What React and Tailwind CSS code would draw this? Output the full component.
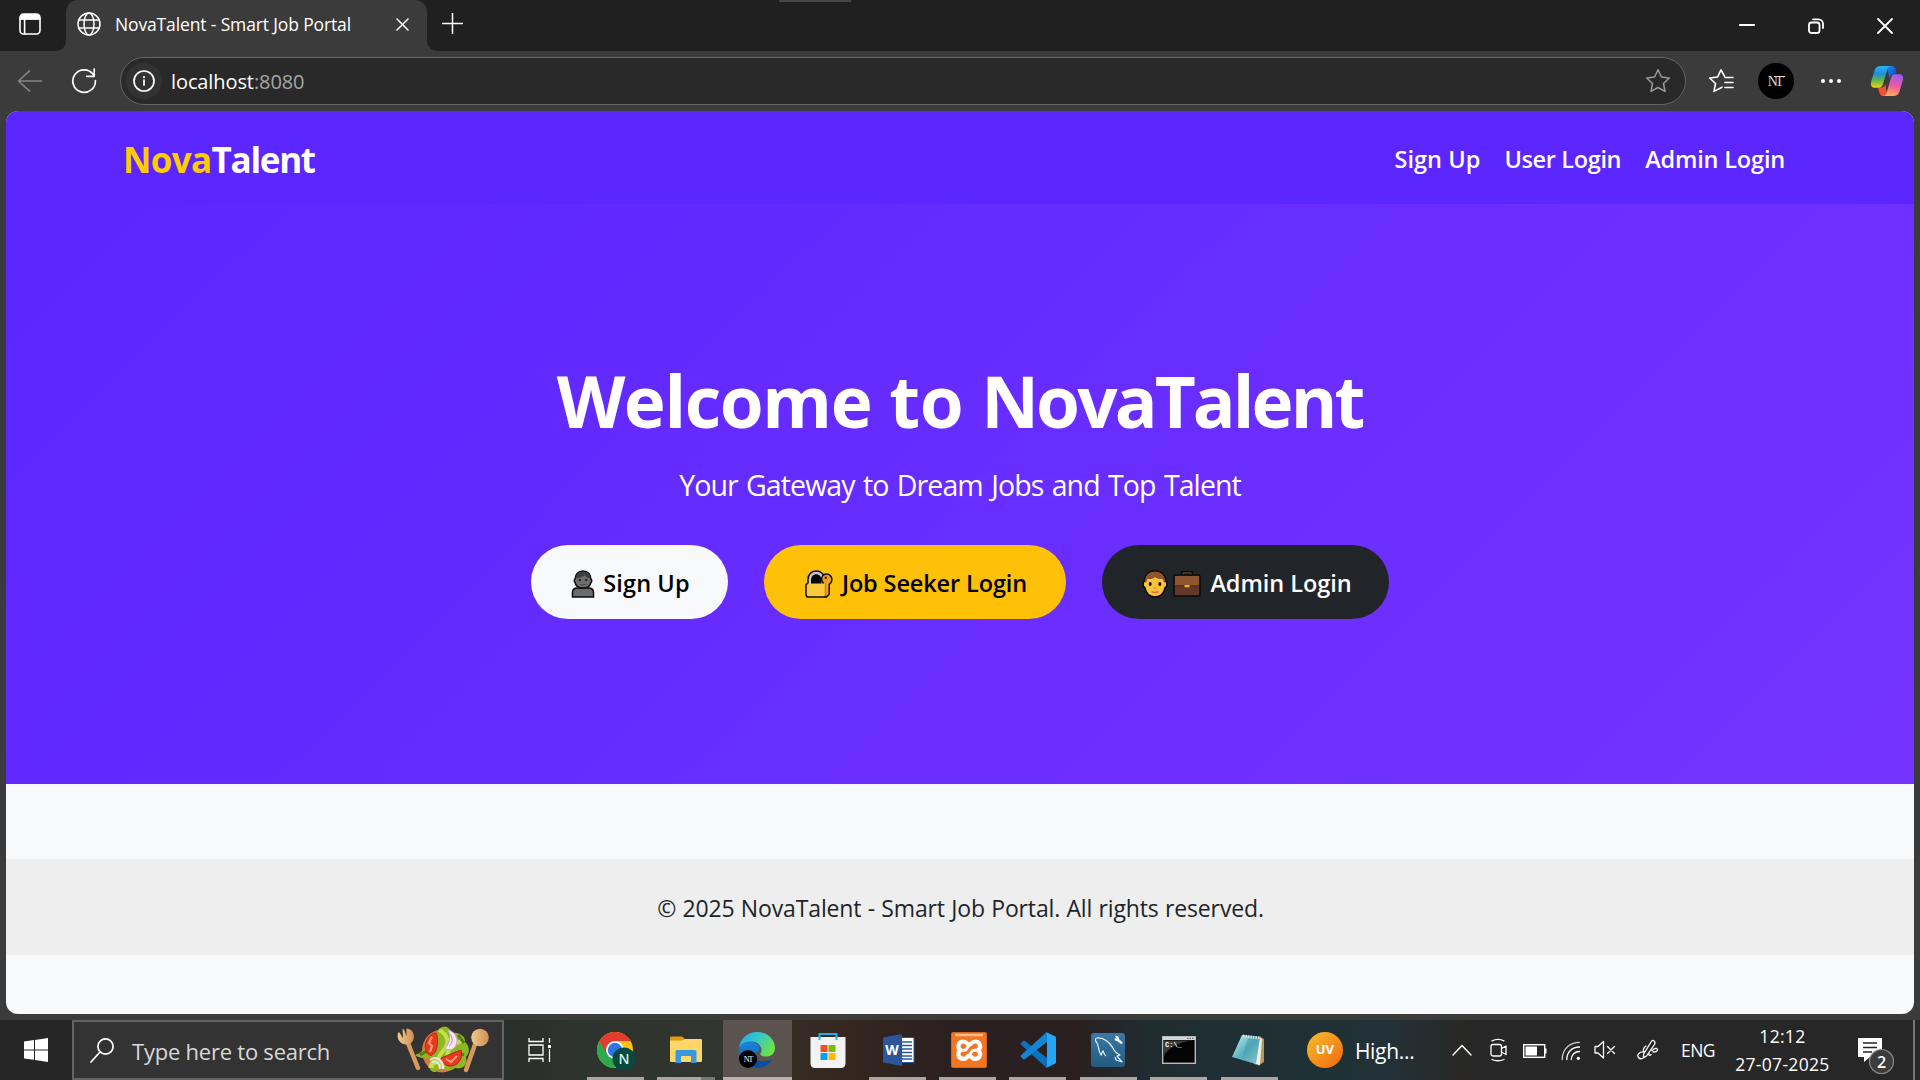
import React from "react";

const STROKE = { fill: "none", stroke: "currentColor", strokeLinecap: "round", strokeLinejoin: "round" };

function TabStrip() {
  return (
    <div className="relative flex h-[51px] items-center bg-[#202020] text-white">
      <svg className="ml-[19px] mt-[-3px] h-[22px] w-[22px]" viewBox="0 0 22 22" {...STROKE} strokeWidth="1.6">
        <rect x="1" y="1" width="20" height="20" rx="3.5" />
        <path d="M1.5 2.500q1-1.500 3-1.500h13q2 0 3 1.500v4h-19z" fill="white" stroke="none" />
        <path d="M1 6h20M5.6 6v15" />
      </svg>
      <div className="relative ml-[25px] flex h-[51px] w-[361px] items-center rounded-t-[12px] bg-[#3b3b3b]">
        <svg className="absolute -left-[10px] bottom-0 h-[10px] w-[10px]" viewBox="0 0 10 10"><path d="M10 0v10H0A10 10 0 0 0 10 0z" fill="#3b3b3b" /></svg>
        <svg className="absolute -right-[10px] bottom-0 h-[10px] w-[10px]" viewBox="0 0 10 10"><path d="M0 0v10h10A10 10 0 0 1 0 0z" fill="#3b3b3b" /></svg>
        <svg className="ml-[11px] mt-[-3px] h-[24px] w-[24px]" viewBox="0 0 24 24" {...STROKE} strokeWidth="1.5">
          <circle cx="12" cy="12" r="11" /><ellipse cx="12" cy="12" rx="5" ry="11" /><path d="M2 8h20M2 16h20" />
        </svg>
        <span className="ml-[14px] mt-[-3px] w-[236px] whitespace-nowrap text-[17.5px] tracking-[-0.140px]">NovaTalent - Smart Job Portal</span>
        <svg className="ml-[45px] mt-[-2px] h-[13px] w-[13px]" viewBox="0 0 13 13" {...STROKE} strokeWidth="1.5"><path d="M1 1l11 11M12 1L1 12" /></svg>
      </div>
      <svg className="ml-[15px] mt-[-4px] h-[21px] w-[21px]" viewBox="0 0 21 21" {...STROKE} strokeWidth="1.5"><path d="M10.500.5v20M.5 10.500h20" /></svg>
      <div className="absolute left-[779px] top-0 h-[2px] w-[72px] bg-[#454545]" />
      <svg className="ml-auto mt-[-1px] h-[16px] w-[16px]" viewBox="0 0 16 16" {...STROKE} strokeWidth="1.8"><path d="M.8 8h14.400" /></svg>
      <svg className="ml-[53px] h-[16px] w-[16px]" viewBox="0 0 16 16" {...STROKE} strokeWidth="1.8">
        <rect x="1" y="4.500" width="10.500" height="10.500" rx="2.500" /><path d="M5 1.300h5.500a4.500 4.500 0 0 1 4.500 4.500V10" />
      </svg>
      <svg className="ml-[53px] mr-[27px] h-[16px] w-[16px]" viewBox="0 0 16 16" {...STROKE} strokeWidth="1.8"><path d="M1 1l14 14M15 1L1 15" /></svg>
    </div>
  );
}

function Copilot() {
  return (
    <svg className="h-[32px] w-[34px]" viewBox="0 0 34 32">
      <defs>
        <linearGradient id="cpA" x1="0" y1="0" x2="0" y2="1"><stop offset="0" stopColor="#28b5f5" /><stop offset=".35" stopColor="#1b8fe0" /><stop offset=".65" stopColor="#5fb54a" /><stop offset="1" stopColor="#f6cf10" /></linearGradient>
        <linearGradient id="cpB" x1=".6" y1="0" x2=".3" y2="1"><stop offset="0" stopColor="#9a5cf0" /><stop offset=".5" stopColor="#ef5aa0" /><stop offset="1" stopColor="#ffb05a" /></linearGradient>
        <linearGradient id="cpC" x1="0" y1="0" x2="1" y2="1"><stop offset="0" stopColor="#1b8fe8" /><stop offset="1" stopColor="#1a35c8" /></linearGradient>
      </defs>
      <path d="M17 1h4.500c2.500 0 3.500 1.500 4.200 4L27 9.500h-2.500c-3 0-4 1-5 4z" fill="url(#cpC)" />
      <path d="M17 31h-4c-2 0-3-1.500-3.800-4L8 22.500h3c3 0 3.500-1 4.500-4z" fill="#f4502e" />
      <path d="M10.500 1H21c-2.500 0-3.300 2-4 4.500l-3.800 13c-.8 2.700-2 4.200-5 4.200H4.600C1.500 22.700.3 20 1.200 16.500L4.500 5.500C5.400 2.500 7.500 1 10.500 1z" fill="url(#cpA)" />
      <path d="M23.500 31H13c2.500 0 3.300-2 4-4.500l3.800-13c.8-2.700 2-4.200 5-4.200h3.600c3.100 0 4.300 2.700 3.400 6.200l-3.300 11C28.600 29.500 26.500 31 23.500 31z" fill="url(#cpB)" />
    </svg>
  );
}

function AddressBar() {
  return (
    <div className="flex h-[60px] items-center bg-[#3b3b3b] text-white">
      <svg className="ml-[17px] mt-[-1px] h-[24px] w-[26px] text-[#858585]" viewBox="0 0 26 24" {...STROKE} strokeWidth="1.600"><path d="M24.500 12H1.500M12.500 1.800L1.500 12l11 10.200" /></svg>
      <svg className="ml-[28px] h-[26px] w-[26px]" viewBox="0 0 26 26" {...STROKE} strokeWidth="1.700"><path d="M24.400 12.500A11.300 11.300 0 1 1 22.300 6.500M23.200 1v7.300h-7.500" /></svg>
      <div className="ml-[23px] flex h-[48px] w-[1566px] items-center rounded-full border-[1.500px] border-[#646464] bg-[#292929]">
        <div className="ml-[5px] flex h-[36px] w-[36px] items-center justify-center rounded-full bg-[#323232]">
          <svg className="h-[22px] w-[22px]" viewBox="0 0 22 22" {...STROKE} strokeWidth="1.700"><circle cx="11" cy="11" r="10" /><path d="M11 10v5" /><path d="M11 7v.1" strokeWidth="2.200" /></svg>
        </div>
        <div className="ml-[9px] mt-[1px] whitespace-nowrap text-[20px] tracking-[-0.100px]">localhost<span className="text-[#a6a6a6]">:8080</span></div>
        <svg className="ml-auto mr-[14px] h-[26px] w-[26px] text-[#9a9a9a]" viewBox="0 0 26 26" {...STROKE} strokeWidth="1.500"><path d="M13 1.800l3.400 7.200 7.900 1-5.800 5.500 1.500 7.900-7-3.900-7 3.900 1.500-7.900L1.700 10l7.900-1z" /></svg>
      </div>
      <svg className="ml-[22px] h-[26px] w-[26px]" viewBox="0 0 26 26" {...STROKE} strokeWidth="1.600"><path d="M16.500 8.200L13 1.800 9.600 9l-7.900 1 5.800 5.500L6 23.400l8-4.200M17 9.500h8M17 14.500h8M17 19.500h8" /></svg>
      <div className="relative ml-[24px] flex h-[36px] w-[36px] items-center justify-center rounded-full bg-black pr-[3px] font-['Liberation_Serif'] text-[14px] tracking-[-2.500px] text-[#dcdcdc]">NT<span className="absolute left-[16px] top-[13px] h-[1px] w-[11px] bg-[#dcdcdc]" /></div>
      <svg className="ml-[26px] h-[6px] w-[22px]" viewBox="0 0 22 6" fill="white"><circle cx="3" cy="3" r="2" /><circle cx="11" cy="3" r="2" /><circle cx="19" cy="3" r="2" /></svg>
      <div className="ml-[28px]"><Copilot /></div>
    </div>
  );
}

function PersonEmoji() {
  return (
    <svg className="h-[28px] w-[24px]" viewBox="0 0 24 28" stroke="#0b0b0b" strokeWidth="1.500">
      <path d="M1.500 27v-4.500c0-3 2-4.500 5-4.500h11c3 0 5 1.500 5 4.500V27z" fill="#6b6b6b" />
      <path d="M4 9C4.300 4.500 7.200 1 12 1s7.700 3.500 8 8c1 .8 1 2.600 0 3.400-.6 3.400-3.700 5.600-8 5.600s-7.400-2.200-8-5.600c-1-.8-1-2.600 0-3.400z" fill="#6e6e6e" />
      <path d="M4.500 8.500C5 4.500 7.800 1.800 12 1.800s7 2.700 7.500 6.700C17 8 14.500 6.500 13.500 5 12 7 8 7.500 4.500 8.500z" fill="#3d3d3d" stroke="none" />
      <circle cx="8.800" cy="10" r="1.100" fill="#111" stroke="none" /><circle cx="15.200" cy="10" r="1.100" fill="#111" stroke="none" />
      <path d="M9 14.200q3 1.600 6 0" fill="none" stroke="#4a4a4a" strokeWidth="1" />
    </svg>
  );
}

function LockEmoji() {
  return (
    <svg className="h-[28px] w-[28px]" viewBox="0 0 28 28">
      <path d="M3 15V9.500C3 4 7 .9 11.200.9c3 0 5.500 1.500 6.900 3.600V15z" fill="#c4c8cc" stroke="#111" strokeWidth="1.500" />
      <path d="M6 14v-4c0-3.500 2.300-5.800 5.200-5.800s5.300 2.300 5.300 5.800v4z" fill="#050505" />
      <path d="M17.500 6c2-2.600 6.500-2.600 8.500.5 1.800 3 .6 6.500-1.800 8v9.500l-2 2.500h-4V13c-1.500-2-1.800-5-.7-7z" fill="#f0a11a" stroke="#111" strokeWidth="1.500" />
      <circle cx="20.800" cy="7.800" r="1.200" fill="#111" />
      <path d="M3 13.500h16.500V27h-16C1.800 27 1 26.200 1 24.500V15.500c0-1.200.8-2 2-2z" fill="#fcc83c" />
      <path d="M19.500 27h-16C1.800 27 1 26.200 1 24.500V15.500c0-1.200.8-2 2-2M19.500 27h2.500" fill="none" stroke="#111" strokeWidth="1.500" />
      <path d="M20.500 13.500v12" stroke="#c9810c" strokeWidth="1" />
    </svg>
  );
}

function BoyEmoji() {
  return (
    <svg className="h-[28px] w-[26px]" viewBox="0 0 26 28">
      <path d="M2.500 11C2.500 5 7 1 13 1s10.500 4 10.500 10c2 1 2 5.500-.3 6.500C22 23.500 18 27 13 27S4 23.500 2.800 17.500C.5 16.500.5 12 2.500 11z" fill="#fcc43a" stroke="#0d0d0d" strokeWidth="1.600" />
      <path d="M3 13C2.500 6 7 1.800 13 1.800S23.500 6 23 13c-1.500-1-2-2.500-2.500-4-3.500.3-6-.5-7.500-2-2 2-4.500 2.300-7.500 2C5 10.500 4.500 12 3 13z" fill="#8f5430" />
      <ellipse cx="8.200" cy="14" rx="1.500" ry="2" fill="#111" /><ellipse cx="17.800" cy="14" rx="1.500" ry="2" fill="#111" />
      <path d="M11.500 18h3" stroke="#ef8a5a" strokeWidth="1.500" /><path d="M9.500 21.500q3.500 2 7 0" fill="none" stroke="#e2694a" strokeWidth="1.500" />
    </svg>
  );
}

function BriefcaseEmoji() {
  return (
    <svg className="h-[26px] w-[28px]" viewBox="0 0 28 26">
      <path d="M9.500 5V1.500h9V5" fill="none" stroke="#080808" strokeWidth="3.200" /><path d="M10 5V2h8v3" fill="none" stroke="#8f5430" strokeWidth="1" />
      <rect x="1" y="4" width="26" height="21" rx="1.500" fill="#633a2a" stroke="#080808" strokeWidth="1.500" />
      <path d="M2 5h24v9.500H2z" fill="#8f5430" /><path d="M2 14.800h24" stroke="#4c2b20" /><rect x="11.500" y="14" width="5" height="2.200" fill="#f2b90c" />
    </svg>
  );
}

function Page() {
  return (
    <div className="mx-[6px] h-[903px] overflow-hidden rounded-[12px] bg-[#f8f9fa] text-white">
      <header className="flex h-[93px] items-center justify-between bg-[#5b26ff] pl-[117px] pr-[129px] shadow-[0_2px_6px_rgba(0,0,0,0.02)]">
        <div className="mt-[6px] whitespace-nowrap text-[35px] font-bold tracking-[-1.300px]"><span className="tracking-[-0.650px] text-[#ffcc00]">Nova</span>Talent</div>
        <nav className="mt-[4px] flex gap-[24px] whitespace-nowrap text-[23.5px] font-semibold">
          <span className="tracking-[0.050px]">Sign Up</span><span className="tracking-[-0.350px]">User Login</span><span className="tracking-[-0.180px]">Admin Login</span>
        </nav>
      </header>
      <section className="flex h-[580px] flex-col items-center bg-[linear-gradient(135deg,#5b26ff,#7433ff)]">
        <h1 className="mt-[153px] whitespace-nowrap pr-[1px] text-[71px] font-bold leading-[88px]"><span className="tracking-[-1.400px]">Welcome</span><span className="tracking-[-0.400px]"> to </span><span className="tracking-[-2.900px]">NovaTalent</span></h1>
        <p className="mt-[18px] whitespace-nowrap text-[28.5px] leading-[44px] tracking-[-0.900px] [word-spacing:1.800px]">Your Gateway to Dream Jobs and Top Talent</p>
        <div className="mt-[38px] flex gap-[36px] whitespace-nowrap text-[23.5px] font-semibold tracking-[-0.050px]">
          <div className="flex h-[74px] w-[197px] items-center justify-center gap-[8px] rounded-full bg-[#f8f9fa] pl-[2px] pt-[3px] text-black"><PersonEmoji /><span className="tracking-[0.100px]">Sign Up</span></div>
          <div className="flex h-[74px] w-[302px] items-center justify-center gap-[9px] rounded-full bg-[#ffc107] pl-[2px] pt-[3px] text-black"><LockEmoji /><span className="tracking-[-0.120px]">Job Seeker Login</span></div>
          <div className="flex h-[74px] w-[287px] items-center justify-center rounded-full bg-[#212529] pl-[3px] pt-[3px]"><BoyEmoji /><span className="ml-[5px]"><BriefcaseEmoji /></span><span className="ml-[9px]">Admin Login</span></div>
        </div>
      </section>
      <footer className="mt-[75px] flex h-[96px] items-center justify-center whitespace-nowrap bg-[#eeeeee] pl-[1px] pt-[3px] text-[23px] tracking-[-0.140px] text-[#212529] [word-spacing:0.500px]">
        © 2025 NovaTalent - Smart Job Portal. All rights reserved.
      </footer>
    </div>
  );
}

function Salad() {
  return (
    <svg className="h-[50px] w-[94px]" viewBox="0 0 94 50">
      <defs><linearGradient id="wood" x1="0" x2="1"><stop stopColor="#f3c98e" /><stop offset="1" stopColor="#cf8e50" /></linearGradient></defs>
      <path d="M11.500 17l10.500 26M79.500 18L70 45" stroke="#d79a5c" strokeWidth="4.500" strokeLinecap="round" />
      <path d="M2 8c1.500-3 3 3 5 5L6.500 4c2-1 3 5 4 7L10.500 3.500C19 4 20 15 14.500 18.500 6 22 0 15 2 8z" fill="url(#wood)" />
      <circle cx="84" cy="12.500" r="8.800" fill="url(#wood)" />
      <ellipse cx="46" cy="26" rx="20" ry="21.500" fill="#d9783f" />
      <path d="M42 5c6-6 11-4 14 3 6-1 14 3 13 9 5 4 5 11 1 15 2 8-3 13-11 11-5 4-11 3-14-2-4 9-11 7-12 0 0-4 2-6 4-8-7 1-15 0-18-3 8-2 8-8 15-9 2-7 7-8 8-16z" fill="#8fb623" />
      <path d="M43 5c8 4 12 12 4 21s-4 12 1 17M66 16c-9 2-14 8-15 15" fill="none" stroke="#c4e04e" strokeWidth="4" />
      <path d="M35 43c0-5 4-7 9-7" stroke="#c4e04e" strokeWidth="5" fill="none" />
      <path d="M68 30c-5-2-8-3-12 0M24 30c7-5 10-3 15-7M62 10l6 8" stroke="#587d18" strokeWidth="3" fill="none" />
      <path d="M40 8C29 9 25 28 35 30.500c7-2 8-17 5-22.500z" fill="#e83a22" stroke="#b72416" /><path d="M36 12l-3 6 3 3-2 6" stroke="#ffa27a" strokeWidth="2" fill="none" />
      <path d="M45 33l20-8c3 9-4 17-12 16-5-1-8-5-8-8z" fill="#ea3a25" stroke="#b72416" /><path d="M50 34l5 3 6-6" stroke="#ffa27a" strokeWidth="2" fill="none" />
      <path d="M52 5c9 2 12 12 6 18-3 3-8 2-9 0 5-5 6-12 3-18z" fill="#f4e7f1" stroke="#c3a2be" /><path d="M54 9c3 4 3 9-1 12" fill="none" stroke="#bd89b4" />
      <path d="M34 35c7-5 14 1 13 9M36 37c5-1 8 2 8 7" stroke="#eee0ee" strokeWidth="2" fill="none" />
    </svg>
  );
}

function Chrome() {
  return (
    <svg className="h-[40px] w-[40px]" viewBox="0 0 40 40">
      <circle cx="18" cy="20" r="18" fill="#fbc116" />
      <path d="M18 20L2.400 11A18 18 0 0 0 18 38l8-13z" fill="#2da94f" />
      <path d="M18 11h15.600A18 18 0 0 0 2.400 11l7.800 13.500z" fill="#e33b2e" />
      <circle cx="18" cy="20" r="9" fill="white" /><circle cx="18" cy="20" r="7.200" fill="#2b76e5" />
      <circle cx="27" cy="29" r="11.500" fill="#06493f" />
      <text x="27" y="34" textAnchor="middle" fontSize="14" fontWeight="600" fill="#dcebe6">N</text>
    </svg>
  );
}

function Explorer() {
  return (
    <svg className="h-[28px] w-[32px]" viewBox="0 0 32 28">
      <path d="M0 2c0-1 .6-1.500 1.500-1.500H12l2.500 2V8H0z" fill="#e09b0c" />
      <path d="M0 4.500h12l3-1.500h15.500c1 0 1.500.5 1.500 1.500v20c0 1-.5 1.500-1.500 1.500h-29C.5 26 0 25.500 0 24.500z" fill="#ffd768" />
      <path d="M5.500 27V16c0-1.500.8-2 2-2h17c1.300 0 2 .7 2 2v11h-5.500v-7h-10v7z" fill="#3a96dd" />
    </svg>
  );
}

function Edge() {
  return (
    <svg className="h-[36px] w-[36px]" viewBox="0 0 36 36">
      <defs>
        <linearGradient id="edA" x1="0" y1="0" x2="1" y2=".5"><stop stopColor="#1fa7e6" /><stop offset=".5" stopColor="#35c6d0" /><stop offset="1" stopColor="#67e24e" /></linearGradient>
        <linearGradient id="edB" x1="0" y1="0" x2="0" y2="1"><stop stopColor="#1a86dc" /><stop offset="1" stopColor="#0a5cb8" /></linearGradient>
      </defs>
      <path d="M0 17C1 9 9 8 14 10c6 2 7 6 6 9-6 2-5 9 1 11s9-2 12-2c-3 5-8 8-15 8C8 36 0 28 0 18z" fill="url(#edB)" />
      <path d="M15 20c-1 8 7 12 18 7-2 5-8 9-15 9-5-2-8-10-3-16z" fill="#0b4e9f" />
      <path d="M0 16C1 7 8 0 18 0c11 0 18 8 18 16 0 6-4 8.500-9 8.500-5 0-7-2-5-4 2-3-1-11-10-11C6 9.500 1 12 0 16z" fill="url(#edA)" />
      <circle cx="9" cy="27" r="9" fill="black" /><text x="9" y="30" textAnchor="middle" fontFamily="Liberation Serif" fontSize="8" letterSpacing="-1" fill="white">NT</text>
    </svg>
  );
}

function Store() {
  return (
    <svg className="h-[36px] w-[36px]" viewBox="0 0 36 36">
      <path d="M9.500 7V2h17V7" fill="none" stroke="#28aae8" strokeWidth="2" />
      <path d="M.5 5h35v26c0 3-1.500 5-5 5h-25c-3.500 0-5-2-5-5z" fill="#f3f3f3" /><path d="M9.500 4v4M26.500 4v4" stroke="#28aae8" strokeWidth="2" />
      <path d="M10.500 13h7v7h-7z" fill="#f25022" /><path d="M18.500 13h7v7h-7z" fill="#7fba00" /><path d="M10.500 21h7v7h-7z" fill="#00a4ef" /><path d="M18.500 21h7v7h-7z" fill="#ffb900" />
    </svg>
  );
}

function Word() {
  return (
    <svg className="h-[32px] w-[32px]" viewBox="0 0 32 32">
      <path d="M17 3.500h14v25H17z" fill="white" stroke="#2b579a" /><path d="M19 8h10M19 11.500h10M19 15h10M19 18.500h10M19 22h10M19 25h10" stroke="#2b579a" strokeWidth="1.300" />
      <path d="M0 3.500L19 0v32L0 28.500z" fill="#2b579a" /><text x="9" y="21" textAnchor="middle" fontSize="14" fontWeight="700" fill="white">W</text>
    </svg>
  );
}

function Xampp() {
  return (
    <svg className="h-[36px] w-[36px]" viewBox="0 0 36 36">
      <rect width="36" height="36" rx="3" fill="#f37623" stroke="#b8561b" /><path d="M4 3h28" stroke="#ffb98a" strokeWidth="2.500" />
      <path d="M12.500 9.500c3.500 0 3.500 3.200 5.700 3.200s2.200-3.200 5.800-3.200c5.500 0 6.500 6.500 3 8.700 3.500 2.200 2.500 8.700-3 8.700-3.500 0-3.600-3.200-5.800-3.200s-2.200 3.200-5.700 3.200c-5.500 0-6.500-6.500-3-8.700-3.500-2.200-2.500-8.700 3-8.700z" fill="none" stroke="white" strokeWidth="4.200" strokeLinejoin="round" />
      <path d="M9.500 18.200h4c3 0 2.500-4 4.700-4M27 18.200h-4c-3 0-2.500 4-4.800 4" fill="none" stroke="white" strokeWidth="3" />
    </svg>
  );
}

function VsCode() {
  return (
    <svg className="h-[36px] w-[36px]" viewBox="0 0 36 36">
      <path d="M1 11l2-2c.6-.5 1.200-.5 2 0L27 26v9.500c-.6 0-1.200-.3-1.700-.8L1 12.800c-.6-.6-.6-1.200 0-1.800z" fill="#0b70bd" />
      <path d="M1 25l2 2c.6.5 1.200.5 2 0L27 10V.5c-.6 0-1.200.3-1.700.8L1 23.200c-.6.6-.6 1.200 0 1.800z" fill="#1485d2" />
      <path d="M25.500 35.500c.5.300 1 .3 1.500 0l7.500-3.500c.9-.4 1.500-1 1.500-2V6c0-1-.6-1.600-1.500-2L27 .5c-.5-.3-1-.3-1.500 0 .8 0 1.500.5 1.500 1.500v32c0 1-.7 1.500-1.500 1.500z" fill="#25a6f2" />
    </svg>
  );
}

function MySql() {
  return (
    <svg className="h-[34px] w-[34px]" viewBox="0 0 34 34">
      <defs><linearGradient id="my" x1="0" y1="0" x2="0" y2="1"><stop stopColor="#3a78a5" /><stop offset="1" stopColor="#245a80" /></linearGradient></defs>
      <rect width="34" height="34" rx="3" fill="url(#my)" />
      <path d="M15 23c-2-1-2-4-3-5-1 1-1 3-2 4-3-4-2-9-4-12-2-2-2-5 0-5 7-1 13 5 16 10 1 3 3 5 7 7l-3 1 5 6-6-2-1-3" fill="none" stroke="#e6f0f6" strokeWidth="1.200" strokeLinejoin="round" />
      <path d="M24 3c2-1 4 0 4 3l4 4-2 1-4-3c-2 0-3-1-2-3l2 1z" fill="#f0f5f8" />
    </svg>
  );
}

function Cmd() {
  return (
    <svg className="h-[28px] w-[34px]" viewBox="0 0 34 28">
      <rect x=".7" y=".7" width="32.600" height="26.600" fill="#050505" stroke="#b8bcc0" strokeWidth="1.400" /><path d="M1 1h32v3H1z" fill="#d4d7da" /><path d="M25 2.300h7" stroke="#555" strokeDasharray="1.500 1" />
      <path d="M1.500 4.500h30C15 6 5 13 1.500 21z" fill="#3b3b3b" /><text x="3" y="11" fontFamily="Liberation Mono" fontWeight="700" fontSize="7" fill="white">C:\_</text>
    </svg>
  );
}

function Notepad() {
  return (
    <svg className="h-[32px] w-[34px]" viewBox="0 0 34 32">
      <defs><linearGradient id="np" x1="0" y1="0" x2="1" y2="1"><stop stopColor="#d1f1f4" /><stop offset=".5" stopColor="#58b3c0" /><stop offset="1" stopColor="#b7e3e9" /></linearGradient></defs>
      <path d="M28 3l4 2v23l-6 4z" fill="#b89655" /><path d="M26 3l4 2-2 26-6-1z" fill="#eceff0" />
      <path d="M10 1l18 2-4 27L0 23z" fill="url(#np)" /><path d="M17 2L9 26l15 4 4-27z" fill="#368c9b" opacity=".35" /><path d="M11 2l18 2" stroke="#dedede" strokeWidth="2.800" strokeDasharray="1.500 1" />
    </svg>
  );
}

function TaskButton({ children, active, open, split }) {
  return (
    <div className="h-full w-[70.4px]">
      <div className={active ? "relative flex h-full w-[69px] items-center justify-center bg-[#5b534f]" : "relative flex h-full w-full items-center justify-center pr-[3px]"}>
        {children}
        {open && <div className={active ? "absolute bottom-0 left-0 h-[3px] w-full bg-[#b8b1ae]" : "absolute bottom-0 left-[5px] h-[3px] w-[57px] bg-[#aaa5a3]"} />}
        {split && <div className="absolute bottom-0 left-[49px] h-[3px] w-[14px] bg-[#777]" />}
      </div>
    </div>
  );
}

function Tray() {
  return (
    <>
      <svg className="ml-[36px] h-[12px] w-[20px]" viewBox="0 0 20 12" {...STROKE} strokeWidth="1.400"><path d="M1 11l9-9.500 9 9.500" /></svg>
      <svg className="ml-[18px] h-[24px] w-[18px]" viewBox="0 0 18 24" {...STROKE} strokeWidth="1.300"><rect x="1" y="6.500" width="10.500" height="11.500" rx="2" /><path d="M11.500 10.500L16 8v8.500L11.500 14M2 2.800q6-3 12 0M2 21.500q6 2.500 12 0" /></svg>
      <svg className="ml-[15px] mt-[1px] h-[14px] w-[24px]" viewBox="0 0 24 14"><rect x=".7" y=".7" width="21" height="12.600" fill="none" stroke="white" strokeWidth="1.400" /><path d="M2.500 2.500H14v9H2.500zM22 4.500h1.500v5H22z" fill="white" /></svg>
      <svg className="ml-[14px] mt-[2px] h-[20px] w-[20px]" viewBox="0 0 20 20" {...STROKE} strokeWidth="1.300"><path d="M1.200 18.500C1.200 8.500 8.500 1.300 18.500 1.300" opacity=".8" /><path d="M5.800 18.500C5.800 11 11 6 18.500 6M10.300 18.500c0-4.700 3.500-8 8.200-8" /><circle cx="17.300" cy="17.300" r="1.600" fill="white" stroke="none" /></svg>
      <svg className="ml-[13px] h-[20px] w-[22px]" viewBox="0 0 22 20" {...STROKE} strokeWidth="1.300"><path d="M1 6.500v6.500h3l5.500 5V1.500L4 6.500zM13.500 6.500l7 7M20.500 6.500l-7 7" /></svg>
      <svg className="ml-[21px] h-[22px] w-[22px]" viewBox="0 0 22 22" {...STROKE} strokeWidth="1.300"><path d="M16.500 1.500c2 1 2 2 1 4L9.500 17l-3.200 2 .4-4L14 3c.8-1.300 1.400-2 2.500-1.500zM9 7c-2 1-3.500 4-2 6M6.500 13c-4-.5-7 3-5 5.500 1.500 2 5 1.500 5.500-1M15 11.500c2.500-2.500 5-2.500 5.500-1s-2 2.500-4.500 2.500M12 14c-1 2 .5 3 2 1.500" /></svg>
      <span className="ml-[22px] mt-[1px] w-[35px] whitespace-nowrap text-[17.5px] tracking-[-0.500px]">ENG</span>
      <div className="ml-[19px] flex w-[95px] flex-col items-center whitespace-nowrap text-[17.5px] leading-[28px] tracking-[0.300px]"><span>12:12</span><span>27-07-2025</span></div>
      <svg className="ml-[28px] mt-[12px] h-[40px] w-[38px]" viewBox="0 0 38 40">
        <path d="M0 2h24v19H12l-6 5v-5H0z" fill="white" /><path d="M5 7h14M5 11.500h14M5 16h9" stroke="#222" strokeWidth="1.400" />
        <circle cx="23.500" cy="25.500" r="12" fill="#3c3c3c" stroke="#8b8b8b" strokeWidth="1.200" /><text x="23.500" y="31.500" textAnchor="middle" fontSize="16" fontWeight="600" fill="white">2</text>
      </svg>
      <div className="ml-auto mr-[5px] h-full w-[2px] bg-[#777]" />
    </>
  );
}

function Taskbar() {
  return (
    <div className="mt-[6px] flex h-[60px] items-center bg-[linear-gradient(90deg,#262626_0%,#272727_21%,#2d332e_30%,#323530_37%,#35271f_44%,#2a1f21_50%,#2a1f21_56%,#1f2d31_60%,#203136_70%,#223238_72%,#292827_76%,#272727_80%)] text-white">
      <svg className="ml-[24px] h-[24px] w-[24px]" viewBox="0 0 24 24" fill="white"><path d="M0 3.500l10-1.400v9.300H0zM11 2l13-2v11.400H11zM0 12.500h10v9.300L0 20.500zM11 12.500h13V24l-13-1.900z" /></svg>
      <div className="ml-[24px] flex h-[60px] w-[432px] items-center border-2 border-[#636363] bg-[#333333]">
        <svg className="ml-[16px] h-[25px] w-[24px]" viewBox="0 0 24 25" {...STROKE} strokeWidth="1.700"><circle cx="15.500" cy="8.500" r="7.600" /><path d="M10 14L1 24" /></svg>
        <span className="ml-[18px] mt-[2px] w-[198px] whitespace-nowrap text-[22px] tracking-[-0.230px] text-[#d8d8d8]">Type here to search</span>
        <div className="ml-auto mr-[12px]"><Salad /></div>
      </div>
      <svg className="ml-[24px] h-[26px] w-[26px]" viewBox="0 0 26 26" fill="none" stroke="white" strokeWidth="1.300"><path d="M1 1v3.500h14V1M1 25v-3.500h14V25M1 8h14v10H1zM21.500 1v5M21.500 12v13" /><path d="M20 8h3v3h-3z" fill="white" stroke="none" /></svg>
      <div className="ml-[28px] flex h-full shrink-0">
        <TaskButton open><span className="ml-[3px]"><Chrome /></span></TaskButton>
        <TaskButton open split><Explorer /></TaskButton>
        <TaskButton open active><Edge /></TaskButton>
        <TaskButton><span className="ml-[2px]"><Store /></span></TaskButton>
        <TaskButton open><span className="ml-[3px]"><Word /></span></TaskButton>
        <TaskButton open><span className="ml-[2px]"><Xampp /></span></TaskButton>
        <TaskButton open><VsCode /></TaskButton>
        <TaskButton open><MySql /></TaskButton>
        <TaskButton open><Cmd /></TaskButton>
        <TaskButton open><Notepad /></TaskButton>
      </div>
      <div className="ml-[21px] flex h-[36px] w-[36px] items-center justify-center rounded-full bg-gradient-to-br from-[#f2bd2c] to-[#f2640c] text-[13px] font-bold">UV</div>
      <span className="ml-[12px] mt-[3px] w-[61px] whitespace-nowrap text-[21px] tracking-[-0.300px]">High...</span>
      <Tray />
    </div>
  );
}

export default function App() {
  return (
    <div className="h-[1080px] w-[1920px] overflow-hidden bg-[#3b3b3b] font-['Open_Sans','Noto_Sans',sans-serif]">
      <TabStrip />
      <AddressBar />
      <Page />
      <Taskbar />
    </div>
  );
}
